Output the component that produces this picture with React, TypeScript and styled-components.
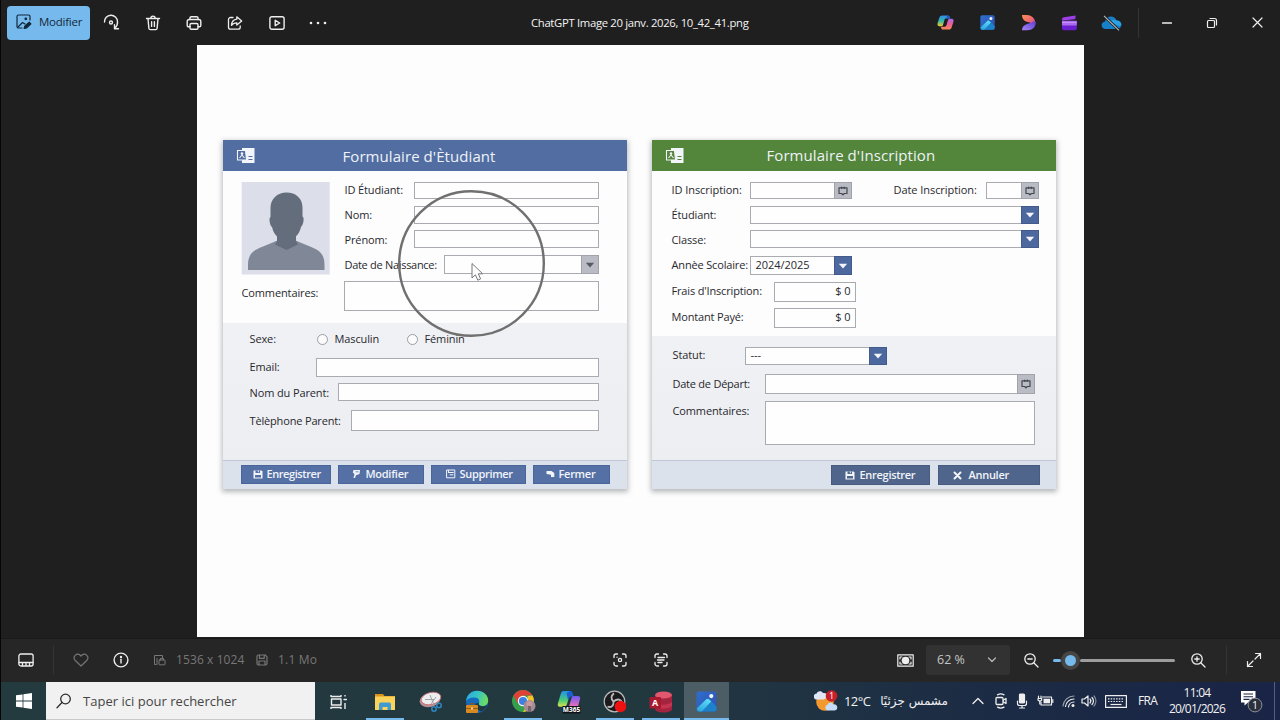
import React from 'react'
import styled, { createGlobalStyle } from 'styled-components'

const GlobalStyle = createGlobalStyle`
  * {
    box-sizing: border-box;
  }
  body {
    margin: 0;
    background: #1f1f1f;
    font-family: 'Open Sans', 'Noto Sans', sans-serif;
  }
  svg {
    display: block;
    flex: none;
  }
`

const Screen = styled.div`
  position: relative;
  display: flex;
  flex-direction: column;
  width: 1280px;
  height: 720px;
  overflow: hidden;
  background: #1f1f1f;
  border-left: 1px solid #050505;
`

/* generic bar pieces */

const Cell = styled.div<{ $w: number }>`
  display: flex;
  flex: none;
  align-items: center;
  justify-content: center;
  width: ${({ $w }) => $w}px;
`

const Spacer = styled.div`
  flex: 1;
`

const Separator = styled.div`
  flex: none;
  width: 1px;
  height: 30px;
  background: #343434;
`

const DesktopEdge = styled.div`
  flex: none;
  width: 1px;
  background: #4a6482;
`

const Caption = styled.span<{ $size?: number; $ls?: number; $color?: string; $w?: number }>`
  flex: none;
  width: ${({ $w }) => ($w ? `${$w}px` : 'auto')};
  color: ${({ $color }) => $color || '#f2f2f2'};
  font-size: ${({ $size }) => $size || 12}px;
  letter-spacing: ${({ $ls }) => $ls || 0}px;
  line-height: 16px;
  white-space: nowrap;
`

/* title bar */

const TitleBar = styled.header`
  display: flex;
  flex: none;
  align-items: center;
  height: 45px;
`

const EditButton = styled.button`
  display: flex;
  flex: none;
  align-items: flex-start;
  gap: 7px;
  width: 83px;
  height: 34px;
  margin: 0 1px 0 6px;
  padding: 8px 0 0 9px;
  border: 0;
  border-radius: 4px;
  background: #76b9ed;
  font-family: inherit;
`

const FileName = styled.div`
  flex: none;
  width: 218px;
  margin-left: 193px;
  padding-bottom: 1px;
  color: #f4f4f4;
  font-size: 11.3px;
  letter-spacing: -0.32px;
  white-space: nowrap;
`

/* viewer */

const Viewer = styled.main`
  display: flex;
  flex: none;
  justify-content: center;
  height: 593px;
  padding-right: 1px;
`

const Picture = styled.div`
  position: relative;
  display: flex;
  align-items: flex-start;
  gap: 25px;
  width: 887px;
  height: 592px;
  padding: 95px 0 0 26px;
  background: #fdfdfd;
`

const Card = styled.section`
  flex: none;
  width: 404px;
  height: 349px;
  background: #fdfdfe;
  box-shadow: 0 2px 5px 1px rgba(70, 75, 85, 0.38);
`

const CardHeader = styled.div<{ $bg: string }>`
  display: flex;
  align-items: center;
  height: 31px;
  padding-left: 13px;
  background: ${({ $bg }) => $bg};
`

const CardTitle = styled.h2<{ $left: number; $up?: number }>`
  margin: 0 0 0 ${({ $left }) => $left}px;
  padding-bottom: ${({ $up }) => $up || 0}px;
  color: #eef2f8;
  font-size: 15px;
  font-weight: 400;
  letter-spacing: 0.07px;
  line-height: 20px;
  white-space: nowrap;
`

const TopPart = styled.div<{ $h: number; $left: number }>`
  display: flex;
  height: ${({ $h }) => $h}px;
  padding: 11px 0 0 ${({ $left }) => $left}px;
`

const GreyPart = styled.div<{ $h: number; $left: number }>`
  height: ${({ $h }) => $h}px;
  padding-left: ${({ $left }) => $left}px;
  overflow: hidden;
  background: linear-gradient(#f0f1f5, #edeef2);
`

const CardFooter = styled.div<{ $gap: number; $left: number }>`
  display: flex;
  gap: ${({ $gap }) => $gap}px;
  height: 29px;
  padding: 4px 0 0 ${({ $left }) => $left}px;
  border-top: 1px solid #bec7d5;
  background: #dce2ec;
`

const Column = styled.div`
  display: flex;
  flex-direction: column;
  flex: none;
`

const Row = styled.div<{ $h: number; $mt?: number }>`
  display: flex;
  align-items: center;
  height: ${({ $h }) => $h}px;
  margin-top: ${({ $mt }) => $mt || 0}px;
`

const Label = styled.label<{ $w: number; $ls?: number; $up?: number; $down?: number }>`
  flex: none;
  width: ${({ $w }) => $w}px;
  padding: ${({ $down }) => $down || 0}px 0 ${({ $up }) => $up || 0}px 1px;
  color: #28292d;
  font-size: 11px;
  letter-spacing: ${({ $ls }) => $ls ?? -0.12}px;
  line-height: 16px;
  white-space: nowrap;
`

const Field = styled.div<{ $w: number; $right?: boolean }>`
  display: flex;
  flex: none;
  align-items: center;
  justify-content: ${({ $right }) => ($right ? 'flex-end' : 'space-between')};
  align-self: stretch;
  width: ${({ $w }) => $w}px;
  padding-left: 5px;
  padding-right: ${({ $right }) => ($right ? 4 : 0)}px;
  border: 1px solid #a9abb1;
  background: #fefefe;
`

const Value = styled.span`
  padding-bottom: 2px;
  color: #28292d;
  font-size: 11px;
  letter-spacing: -0.05px;
  line-height: 14px;
  white-space: nowrap;
`

const FieldButton = styled.div<{ $tone: 'blue' | 'grey' }>`
  display: flex;
  align-items: center;
  justify-content: center;
  align-self: stretch;
  width: 18px;
  margin: -1px -1px -1px auto;
  border: 1px solid ${({ $tone }) => ($tone === 'blue' ? '#435b8b' : '#a0a3aa')};
  background: ${({ $tone }) => ($tone === 'blue' ? '#4c689f' : '#b9bcc4')};
`

const Radio = styled.span`
  flex: none;
  width: 11px;
  height: 11px;
  margin-right: 6px;
  border: 1px solid #9b9da3;
  border-radius: 50%;
  background: #fbfbfc;
`

const PushButton = styled.button<{ $w: number; $dark?: boolean; $gap?: number; $pl: number; $ls?: number }>`
  display: flex;
  flex: none;
  align-items: center;
  gap: ${({ $gap }) => $gap || 4}px;
  width: ${({ $w }) => $w}px;
  height: ${({ $dark }) => ($dark ? 20 : 19)}px;
  padding: 0 0 ${({ $dark }) => ($dark ? 0 : 1)}px ${({ $pl }) => $pl}px;
  border: 1px solid ${({ $dark }) => ($dark ? '#475b7e' : '#4a659b')};
  background: ${({ $dark }) => ($dark ? '#50658b' : '#5570a4')};
  color: #f1f4f9;
  font-family: inherit;
  font-size: 11px;
  font-weight: 600;
  letter-spacing: ${({ $ls }) => $ls ?? -0.28}px;
  line-height: 16px;
  white-space: nowrap;
`

const Pointer = styled.div`
  position: absolute;
  top: 144px;
  left: 200px;
`

/* status bar */

const StatusBar = styled.footer`
  display: flex;
  flex: none;
  align-items: center;
  height: 44px;
  padding-bottom: 1px;
  border-top: 1px solid #1a1a1a;
  background: #262626;
`

const ZoomBox = styled.div`
  display: flex;
  flex: none;
  align-items: center;
  justify-content: space-between;
  width: 84px;
  height: 30px;
  padding: 0 12px 0 11px;
  border-radius: 3px;
  background: #323232;
`

const Slider = styled.div`
  display: flex;
  flex: none;
  align-items: center;
  width: 122px;
`

const Track = styled.div<{ $w: number; $color: string }>`
  width: ${({ $w }) => $w}px;
  height: 3px;
  border-radius: 2px;
  background: ${({ $color }) => $color};
`

const Thumb = styled.div`
  flex: none;
  width: 19px;
  height: 19px;
  border: 4px solid #454545;
  border-radius: 50%;
  background: #76b9ed;
`

/* taskbar */

const Taskbar = styled.nav`
  display: flex;
  flex: none;
  height: 38px;
  background: linear-gradient(90deg, #233a3f 0%, #22383f 50%, #1f3243 64%, #1b2a45 80%, #1a2446 100%);
`

const Search = styled.div`
  display: flex;
  align-items: center;
  gap: 11px;
  width: 269px;
  padding-left: 10px;
  border-bottom: 1px solid #c8c8c8;
  background: #f1f1f1;
`

const TaskSlot = styled.div<{ $open?: boolean; $active?: boolean }>`
  display: flex;
  flex: none;
  align-items: center;
  justify-content: center;
  width: ${({ $active }) => ($active ? 45 : 38)}px;
  margin: 0 ${({ $active }) => ($active ? 0 : 4)}px;
  padding-top: 1px;
  background: ${({ $active }) => ($active ? '#4d5d66' : 'transparent')};
  box-shadow: ${({ $open }) => ($open ? 'inset 0 -2px #76b9ed' : 'none')};
`

const Clock = styled.div`
  display: flex;
  flex-direction: column;
  flex: none;
  align-items: center;
  width: 64px;
  padding-top: 3px;
`

const Arabic = styled.span`
  width: 68px;
  color: #f0f0f0;
  font-family: 'DejaVu Sans', sans-serif;
  font-size: 12px;
  white-space: nowrap;
`

/* icons */

interface GlyphProps {
  w?: number
  h?: number
  color?: string
  sw?: number
  children: React.ReactNode
}

const Glyph: React.FC<GlyphProps> = ({ w = 16, h = 16, color = '#eeeeee', sw = 1.3, children }) => (
  <svg
    width={w}
    height={h}
    viewBox={`0 0 ${w} ${h}`}
    fill="none"
    stroke={color}
    strokeWidth={sw}
    strokeLinecap="round"
    strokeLinejoin="round"
  >
    {children}
  </svg>
)

const EditIcon = () => (
  <Glyph color="#12283a" sw={1.2}>
    <path d="M14 6V2.5A1.5 1.5 0 0 0 12.500 1H2.500A1.500 1.500 0 0 0 1 2.500v10A1.500 1.500 0 0 0 2.500 14H6" />
    <path d="M2 13l4.500-4.500L9 10" />
    <circle cx="9.800" cy="4.800" r="0.800" fill="#12283a" />
    <path d="M8.200 14.500l.6-2.300 4.400-4.100 1.700 1.700-4.400 4.200z" fill="#12283a" />
  </Glyph>
)

const RotateIcon = () => (
  <Glyph w={17} h={17} sw={1.4}>
    <path d="M1.500 8A6.500 6.500 0 0 1 14.500 7.500c.3 2.500-.6 4.500-2.500 6.500" />
    <path d="M15.500 14.800h-4v-4" />
    <circle cx="8" cy="8.500" r="1.500" />
  </Glyph>
)

const TrashIcon = () => (
  <Glyph sw={1.4}>
    <path d="M1.500 3.500h13M5.800 3.300a2.200 2.200 0 0 1 4.400 0M3 3.800l.9 9.600a1.400 1.400 0 0 0 1.400 1.200h5.400a1.400 1.400 0 0 0 1.400-1.200l.9-9.600M6.600 6.800v4.600M9.400 6.800v4.600" />
  </Glyph>
)

const PrintIcon = () => (
  <Glyph sw={1.4}>
    <path d="M4 4.500V3a1.300 1.300 0 0 1 1.300-1.300h5.400A1.300 1.300 0 0 1 12 3v1.500" />
    <path d="M4 11.800H2.500A1.300 1.300 0 0 1 1.200 10.500V6.500a2 2 0 0 1 2-2h9.600a2 2 0 0 1 2 2v4a1.300 1.300 0 0 1-1.300 1.300H12" />
    <rect x="4" y="8.500" width="8" height="5.800" rx="1.200" />
  </Glyph>
)

const ShareIcon = () => (
  <Glyph>
    <path d="M6 2.500H3.500a2 2 0 0 0-2 2v7.700a2 2 0 0 0 2 2h7.700a2 2 0 0 0 2-2V11" />
    <path d="M9.800 1.800l4.900 4.100-4.900 4.200V7.800c-2.300 0-4 .7-5.300 2.600.2-3.600 2-5.800 5.300-6.200z" />
  </Glyph>
)

const SlideshowIcon = () => (
  <Glyph sw={1.4}>
    <rect x="0.900" y="1.700" width="14.200" height="12.600" rx="2" />
    <path d="M6.200 5.300v5.400L10.700 8z" />
  </Glyph>
)

const MoreIcon = () => (
  <Glyph w={18} h={4}>
    <g fill="#eeeeee" stroke="none">
      <circle cx="2" cy="2" r="1.300" />
      <circle cx="9" cy="2" r="1.300" />
      <circle cx="16" cy="2" r="1.300" />
    </g>
  </Glyph>
)

const CopilotIcon = () => (
  <svg width="17" height="15" viewBox="0 0 20 18">
    <defs>
      <linearGradient id="cpA" x1="0" y1="0" x2="0" y2="1">
        <stop offset="0" stopColor="#2b8cf0" />
        <stop offset="0.5" stopColor="#35b8a8" />
        <stop offset="1" stopColor="#f2cb2c" />
      </linearGradient>
      <linearGradient id="cpB" x1="0" y1="0" x2="0" y2="1">
        <stop offset="0" stopColor="#a66be8" />
        <stop offset="0.5" stopColor="#ef5e97" />
        <stop offset="1" stopColor="#f78a4c" />
      </linearGradient>
    </defs>
    <path d="M6 .5h7c1.500 0 2 1 2.500 3.500H11c-1.500 0-2 1-2.400 2.300L7.300 11c-.5 1.500-1 2.500-2.300 2.500H2.500C.6 13.500 0 11.800.5 10L2.700 3C3.200 1.300 4.300.5 6 .5z" fill="url(#cpA)" />
    <path d="M14 17.500H7c-1.500 0-2-1-2.500-3.500H9c1.500 0 2-1 2.400-2.300L12.700 7c.5-1.500 1-2.500 2.300-2.500h2.500c1.900 0 2.500 1.700 2 3.500l-2.200 7c-.5 1.700-1.600 2.500-3.300 2.500z" fill="url(#cpB)" />
    <path d="M12 .5c2.300 0 2.800 1.500 3.300 4H11" fill="#2456c8" />
  </svg>
)

const PhotosIcon = ({ size = 15 }: { size?: number }) => (
  <svg width={size} height={size} viewBox="0 0 22 22">
    <defs>
      <linearGradient id="phA" x1="0" y1="0" x2="1" y2="1">
        <stop offset="0" stopColor="#2c6fd0" />
        <stop offset="1" stopColor="#3450ad" />
      </linearGradient>
      <linearGradient id="phB" x1="0.500" y1="0" x2="0" y2="1">
        <stop offset="0" stopColor="#59d8f5" />
        <stop offset="1" stopColor="#28a0dc" />
      </linearGradient>
    </defs>
    <rect x="0.500" y="0.500" width="21" height="21" rx="2.500" fill="url(#phA)" />
    <path d="M1 18.500L11 8.700c1-.9 2-.9 3 0l7.500 7.500V19a2.500 2.500 0 0 1-2.500 2.500H3.500A2.500 2.500 0 0 1 1 19z" fill="#1b82cb" />
    <path d="M1 18L10.800 8.700c1-.9 2-.9 2.800 0L16 11 6 21.500H3.500A2.500 2.500 0 0 1 1 19z" fill="url(#phB)" />
    <circle cx="16" cy="5.300" r="2.200" fill="#f3f6fb" />
  </svg>
)

const DesignerIcon = () => (
  <svg width="15" height="17" viewBox="0 0 15 17">
    <defs>
      <linearGradient id="dsA" x1="0" y1="0" x2="1" y2="1">
        <stop offset="0" stopColor="#f8914e" />
        <stop offset="0.500" stopColor="#ee6a6e" />
        <stop offset="1" stopColor="#c13fbf" />
      </linearGradient>
      <linearGradient id="dsB" x1="1" y1="0" x2="0" y2="1">
        <stop offset="0" stopColor="#5a3fd6" />
        <stop offset="1" stopColor="#a783f5" />
      </linearGradient>
    </defs>
    <path d="M1 1h4.500a8.500 8.500 0 0 1 9 7.500c0 1.500-.6 3-1.500 4C12 9.500 9.500 8.500 5 7.500 2.500 6.800 1 4 1 1z" fill="url(#dsA)" />
    <path d="M14.500 9c0 4.500-3.200 7.200-8 7.200H1c0-3 1.500-5 4.500-6 3-1 5-1 6.500-2.700 1.500 0 2.500 0 2.500 1.500z" fill="url(#dsB)" />
  </svg>
)

const ClipchampIcon = () => (
  <svg width="17" height="16" viewBox="0 0 17 16">
    <path d="M1 4.600C1 3 1.700 2.500 3 2.200L14.500.5v2.200c0 .9-.3 1.300-1.200 1.500L1 5.500z" fill="#9d3fe4" />
    <path d="M1 5.800h14.800v7.500c0 1.200-.7 1.900-1.900 1.900h-11C1.700 15.200 1 14.500 1 13.300z" fill="#6a1fd0" />
    <path d="M1 5.800h14.800v4.700H1z" fill="#ab6af0" />
    <path d="M1 7.500h14.800" stroke="#c99bfa" strokeWidth="0.800" />
  </svg>
)

const CloudOffIcon = () => (
  <svg width="21" height="16" viewBox="0 0 21 16">
    <path d="M4.800 14C2.300 14 .6 12.400.6 10.200c0-2 1.500-3.500 3.400-3.700C4.800 3.500 7 1.600 9.900 1.600c2.600 0 4.600 1.500 5.600 3.800 2.900 0 4.900 1.900 4.900 4.400S18.500 14 16 14z" fill="#1680c8" />
    <path d="M9 6.500c2-1.800 5-1.500 6.500-1.100 2.900 0 4.900 1.900 4.900 4.400l-2 1.500z" fill="#2ba0e4" />
    <path d="M3 .8l15 14.500" stroke="#1f1f1f" strokeWidth="2.600" />
    <path d="M3 .8l15 14.500" stroke="#b9bdc0" strokeWidth="1.100" />
  </svg>
)

const FormIcon = ({ bg }: { bg: string }) => (
  <svg width="20" height="17" viewBox="0 0 20 17">
    <path d="M6 1h12.500v15H6z" fill="#f2f5f9" />
    <path d="M12.500 9.500h4M12.500 12.500h4" stroke={bg} strokeWidth="1" />
    <path d="M1.500 3.500h8l1 9.500h-9z" fill={bg} stroke="#f2f5f9" strokeWidth="1.100" />
    <circle cx="6" cy="6.600" r="1.300" fill="#f2f5f9" />
    <path d="M3.500 11l2.500-3 2.500 3" stroke="#f2f5f9" strokeWidth="1.100" fill="none" />
  </svg>
)

const Avatar = () => (
  <svg width="89" height="93" viewBox="0 0 89 93">
    <rect x="0.700" width="88" height="92.500" fill="#dcdfe9" />
    <path d="M7 88v-5c0-11 5-14.500 15-18.500l14.500-6h18l14.500 6c10 4 14.500 7.500 14.500 18.500v5z" fill="#808898" />
    <path d="M45.500 10.500c9.500 0 16 6 16 15v9c2 .5 1.200 8-1.500 10.500-.9 4-2.500 7-5 9.300V59l2 3.500-11.500 5.500-11.500-5.500 2-3.500v-4.500c-2.500-2.500-4-5-4.800-9-2.700-2.500-3.500-10-1.700-10.500v-9c0-9 6.500-15.500 16-15.500z" fill="#646d7c" />
  </svg>
)

const Arrow = ({ color = '#f4f6fa' }: { color?: string }) => (
  <svg width="10" height="6" viewBox="0 0 10 6">
    <path d="M0.800 0.800h8.400L5 5.400z" fill={color} />
  </svg>
)

const CalendarIcon = () => (
  <Glyph w={10} h={10} color="#43464d" sw={1.200}>
    <path d="M1 1.800h8v5.700H6.300L5 8.800 3.700 7.500H1z" />
    <path d="M3.700 1v1.500M6.300 1v1.500" />
  </Glyph>
)

const DiskIcon = ({ bg = '#5570a4' }: { bg?: string }) => (
  <svg width="10" height="9" viewBox="0 0 10 9">
    <path d="M0.500 0.500h8l1 1V8.500h-9z" fill="#f1f4f9" />
    <path d="M2.500.5h4.500v2.500H2.500zM2 5h6v2.500H2z" fill={bg} />
    <path d="M4.800.5h1v1.700h-1z" fill="#f1f4f9" />
  </svg>
)

const PenIcon = () => (
  <svg width="9" height="10" viewBox="0 0 9 10">
    <path d="M1.500 1h6.500L7.500 5 4 6.200 3 9H1.500l1-4L.8 3.500z" fill="#f1f4f9" />
    <path d="M3.500 2.800h3" stroke="#5570a4" strokeWidth="0.800" />
  </svg>
)

const DeleteFormIcon = () => (
  <Glyph w={10} h={10} color="#f1f4f9" sw={1}>
    <rect x="1" y="1" width="7.800" height="7.800" />
    <path d="M2.500 3.500h4.800M2.500 1.500v2M4 5.800h3" />
  </Glyph>
)

const DoorIcon = () => (
  <svg width="9" height="8" viewBox="0 0 9 8">
    <path d="M0.500 1h5l2.800 2V7H5V4.800L.5 4z" fill="#f1f4f9" />
  </svg>
)

const CrossIcon = () => (
  <Glyph w={9} h={9} color="#f1f4f9" sw={2}>
    <path d="M1.500 1.500l6 6M7.500 1.500l-6 6" />
  </Glyph>
)

const SpotlightCursor = () => (
  <svg width="150" height="150" viewBox="0 0 150 150">
    <circle cx="74.500" cy="74.500" r="72.300" fill="none" stroke="#707070" strokeWidth="2.400" />
    <path d="M75 74.500v14.500l3.400-3.200 2.400 5.400 2.800-1.300-2.300-5.100h4.400z" fill="#fdfdfd" stroke="#77787a" strokeWidth="1" />
  </svg>
)

const StudentForm = () => (
  <Card>
    <CardHeader $bg="#526da1">
      <FormIcon bg="#526da1" />
      <CardTitle $left={87}>Formulaire d'Ètudiant</CardTitle>
    </CardHeader>
    <TopPart $h={152} $left={18}>
      <Column>
        <Avatar />
        <Row $h={16} $mt={10}>
          <Label $w={103}>Commentaires:</Label>
        </Row>
      </Column>
      <Column>
        <Row $h={17}>
          <Label $w={70} $up={1}>
            ID Étudiant:
          </Label>
          <Field $w={185} />
        </Row>
        <Row $h={18} $mt={7}>
          <Label $w={70}>Nom:</Label>
          <Field $w={185} />
        </Row>
        <Row $h={18} $mt={6}>
          <Label $w={70} $down={2}>
            Prénom:
          </Label>
          <Field $w={185} />
        </Row>
        <Row $h={19} $mt={7}>
          <Label $w={100} $ls={-0.3}>
            Date de Naissance:
          </Label>
          <Field $w={155}>
            <FieldButton $tone="grey">
              <Arrow color="#565a63" />
            </FieldButton>
          </Field>
        </Row>
        <Row $h={30} $mt={7}>
          <Field $w={255} />
        </Row>
      </Column>
    </TopPart>
    <GreyPart $h={137} $left={26}>
      <Row $h={16} $mt={8}>
        <Label $w={68}>Sexe:</Label>
        <Radio />
        <Label $w={73}>Masculin</Label>
        <Radio />
        <Label $w={50}>Féminin</Label>
      </Row>
      <Row $h={19} $mt={11}>
        <Label $w={67} $up={1}>
          Email:
        </Label>
        <Field $w={283} />
      </Row>
      <Row $h={18} $mt={6}>
        <Label $w={89} $down={2}>
          Nom du Parent:
        </Label>
        <Field $w={261} />
      </Row>
      <Row $h={21} $mt={9}>
        <Label $w={102} $ls={-0.16}>
          Tèlèphone Parent:
        </Label>
        <Field $w={248} />
      </Row>
    </GreyPart>
    <CardFooter $gap={7} $left={18}>
      <PushButton $w={90} $pl={11} $ls={-0.42}>
        <DiskIcon />
        Enregistrer
      </PushButton>
      <PushButton $w={86} $pl={13} $gap={5}>
        <PenIcon />
        Modifier
      </PushButton>
      <PushButton $w={95} $pl={14} $ls={-0.32}>
        <DeleteFormIcon />
        Supprimer
      </PushButton>
      <PushButton $w={77} $pl={12}>
        <DoorIcon />
        Fermer
      </PushButton>
    </CardFooter>
  </Card>
)

const EnrollmentForm = () => (
  <Card>
    <CardHeader $bg="#53853a">
      <FormIcon bg="#53853a" />
      <CardTitle $left={82} $up={2}>
        Formulaire d'Inscription
      </CardTitle>
    </CardHeader>
    <TopPart $h={165} $left={19}>
      <Column>
        <Row $h={17}>
          <Label $w={79} $up={1} $ls={-0.06}>
            ID Inscription:
          </Label>
          <Field $w={102}>
            <FieldButton $tone="grey">
              <CalendarIcon />
            </FieldButton>
          </Field>
          <Cell $w={41} />
          <Label $w={93} $up={1} $ls={-0.06}>
            Date Inscription:
          </Label>
          <Field $w={53}>
            <FieldButton $tone="grey">
              <CalendarIcon />
            </FieldButton>
          </Field>
        </Row>
        <Row $h={18} $mt={7}>
          <Label $w={79}>Étudiant:</Label>
          <Field $w={289}>
            <FieldButton $tone="blue">
              <Arrow />
            </FieldButton>
          </Field>
        </Row>
        <Row $h={18} $mt={6}>
          <Label $w={79} $down={2}>
            Classe:
          </Label>
          <Field $w={289}>
            <FieldButton $tone="blue">
              <Arrow />
            </FieldButton>
          </Field>
        </Row>
        <Row $h={19} $mt={8}>
          <Label $w={79} $up={1} $ls={-0.16}>
            Annèe Scolaire:
          </Label>
          <Field $w={102}>
            <Value>2024/2025</Value>
            <FieldButton $tone="blue">
              <Arrow />
            </FieldButton>
          </Field>
        </Row>
        <Row $h={20} $mt={7}>
          <Label $w={103} $up={2} $ls={-0.16}>
            Frais d'Inscription:
          </Label>
          <Field $w={82} $right>
            <Value>$ 0</Value>
          </Field>
        </Row>
        <Row $h={20} $mt={6}>
          <Label $w={103} $up={2} $ls={-0.16}>
            Montant Payé:
          </Label>
          <Field $w={82} $right>
            <Value>$ 0</Value>
          </Field>
        </Row>
      </Column>
    </TopPart>
    <GreyPart $h={124} $left={20}>
      <Row $h={18} $mt={11}>
        <Label $w={73} $up={2}>
          Statut:
        </Label>
        <Field $w={142}>
          <Value>---</Value>
          <FieldButton $tone="blue">
            <Arrow />
          </FieldButton>
        </Field>
      </Row>
      <Row $h={20} $mt={9}>
        <Label $w={93} $ls={-0.24}>
          Date de Départ:
        </Label>
        <Field $w={270}>
          <FieldButton $tone="grey">
            <CalendarIcon />
          </FieldButton>
        </Field>
      </Row>
      <Row $h={44} $mt={7}>
        <Label $w={93} $up={24}>
          Commentaires:
        </Label>
        <Field $w={270} />
      </Row>
    </GreyPart>
    <CardFooter $gap={8} $left={179}>
      <PushButton $w={99} $pl={13} $gap={5} $dark>
        <DiskIcon bg="#50658b" />
        Enregistrer
      </PushButton>
      <PushButton $w={102} $pl={14} $gap={7} $dark>
        <CrossIcon />
        Annuler
      </PushButton>
    </CardFooter>
  </Card>
)

/* status bar icons */

const FilmstripIcon = () => (
  <Glyph>
    <rect x="0.900" y="2" width="14.200" height="12" rx="2" />
    <path d="M1 10.500h14M4.500 11v2.500M8 11v2.500M11.500 11v2.500" />
  </Glyph>
)

const HeartIcon = () => (
  <Glyph color="#757575" sw={1.200}>
    <path d="M8 14L2 8.200C-.6 5 3.800-.8 8 4c4.200-4.800 8.600 1 6 4.200z" />
  </Glyph>
)

const InfoIcon = () => (
  <Glyph sw={1.4}>
    <circle cx="8" cy="8" r="6.900" />
    <path d="M8 7.300v3.700" />
    <circle cx="8" cy="4.900" r="0.500" fill="#eeeeee" />
  </Glyph>
)

const DimensionsIcon = () => (
  <Glyph w={13} h={12} color="#777777" sw={1}>
    <path d="M3 10.500H1.500v-9H9.500V4M4 4.500v6" />
    <rect x="6" y="6" width="6" height="4.800" rx="0.500" />
    <path d="M7.500 6V4.500h3V6" />
  </Glyph>
)

const SaveIcon = () => (
  <Glyph w={12} h={12} color="#777777" sw={1.200}>
    <path d="M1 2.500A1.500 1.500 0 0 1 2.500 1h6.700L11 2.800v6.700A1.500 1.500 0 0 1 9.500 11h-7A1.500 1.500 0 0 1 1 9.500z" />
    <path d="M3.500 1.300v3h4.700v-3M3 10.700V7h6v3.700" />
  </Glyph>
)

const Corners = () => <path d="M1 4.500V3a2 2 0 0 1 2-2h1.500M9.500 1H11a2 2 0 0 1 2 2v1.500M13 9.500V11a2 2 0 0 1-2 2H9.500M4.500 13H3a2 2 0 0 1-2-2V9.500" />

const VisualSearchIcon = () => (
  <Glyph w={14} h={14}>
    <Corners />
    <circle cx="7" cy="7" r="1.600" />
    <path d="M4 4.200h.1" />
  </Glyph>
)

const TextScanIcon = () => (
  <Glyph w={14} h={14}>
    <Corners />
    <path d="M4 4.500h6.500M3.500 7H10M4 9.500h4" />
  </Glyph>
)

const FitIcon = () => (
  <Glyph w={17} h={13} sw={1.200}>
    <rect x="0.800" y="0.800" width="15.400" height="11.400" />
    <circle cx="8.500" cy="6.500" r="3.200" fill="#eeeeee" />
    <path d="M3 5V3h2M12 3h2v2M14 8v2h-2M5 10H3V8" />
  </Glyph>
)

const ZoomIcon = ({ plus }: { plus?: boolean }) => (
  <Glyph>
    <circle cx="7" cy="7" r="5.200" />
    <path d="M11 11l4 4M4.800 7h4.400" />
    {plus && <path d="M7 4.800v4.400" />}
  </Glyph>
)

const Chevron = ({ up }: { up?: boolean }) => (
  <Glyph w={12} h={8} color={up ? '#eeeeee' : '#b5b5b5'}>
    <path d={up ? 'M1 6.500l5-5 5 5' : 'M2.500 2l3.500 3.500L9.500 2'} />
  </Glyph>
)

/* taskbar icons */

const WindowsLogo = () => (
  <svg width="16" height="16" viewBox="0 0 16 16" fill="#ffffff">
    <path d="M0 2.300l6.600-.9v6.200H0zM7.400 1.300L16 0v7.600H7.400zM0 8.400h6.600v6.200L0 13.700zM7.400 8.400H16V16l-8.600-1.200z" />
  </svg>
)

const TaskViewIcon = () => (
  <Glyph w={17} h={16} sw={1.400}>
    <path d="M1 1v1.500h10V1M1 15v-1.500h10V15M15 1v1.500M15 9v6" strokeLinecap="butt" />
    <rect x="1.500" y="5" width="9.500" height="6" />
    <path d="M14 5.500h2.500" />
  </Glyph>
)

const FolderIcon = () => (
  <svg width="22" height="18" viewBox="0 0 22 18">
    <path d="M1 1h8l1.500 2H21v3H1z" fill="#d9941c" />
    <path d="M1 3.500h20V17H1z" fill="#fbd35b" />
    <path d="M5 17v-5.500C5 10 6 9.500 7 9.500h8c1 0 2 .5 2 2V17h-3.500v-3h-5v3z" fill="#3f9bd0" />
  </svg>
)

const SnipIcon = () => (
  <svg width="24" height="22" viewBox="0 0 24 22">
    <ellipse cx="11" cy="9" rx="10.500" ry="7" transform="rotate(-14 11 9)" fill="#b98f94" />
    <ellipse cx="12" cy="7.500" rx="10" ry="6" transform="rotate(-14 12 7.500)" fill="#ededee" stroke="#c7696d" strokeWidth="0.800" />
    <path d="M11 4l4 10M17 6l-5 7M6 8.500h9" stroke="#9a9da2" strokeWidth="0.900" />
    <circle cx="15" cy="18" r="2.200" fill="none" stroke="#2f86c2" strokeWidth="1.500" />
    <circle cx="20" cy="14.500" r="2.200" fill="none" stroke="#2f86c2" strokeWidth="1.500" />
  </svg>
)

const EdgeIcon = () => (
  <svg width="24" height="24" viewBox="0 0 24 24">
    <defs>
      <linearGradient id="edA" x1="0" y1="0" x2="1" y2="0.300">
        <stop offset="0" stopColor="#2aa6de" />
        <stop offset="0.550" stopColor="#35c4c8" />
        <stop offset="1" stopColor="#6bdc62" />
      </linearGradient>
    </defs>
    <circle cx="12" cy="12" r="11" fill="#1669bb" />
    <path d="M1 11C2 4.500 6.500.8 12 .8c6.500 0 11.200 4.500 11.200 9.700 0 3.500-2.500 5.500-5.700 5.500-2.500 0-4-1-3.500-2.500.8-2.200.4-5.500-4-6C6 7 2.500 9 1 11z" fill="url(#edA)" />
    <path d="M13.800 13c-.8 2.200 1.500 3.800 5 3.200 1.700-.3 3-.9 3.400-.6-1 2.400-3.200 4.800-5.200 5.900-4-.5-7.500-4-6.500-8z" fill="#22383f" />
    <rect x="1" y="15" width="12" height="8" rx="1" fill="#d88a22" />
    <path d="M5 15v-1.300h4V15" stroke="#8a5713" fill="none" />
    <path d="M1 18.500h12" stroke="#8a5713" strokeWidth="0.900" />
    <rect x="6" y="17.500" width="2" height="2" fill="#f6d08c" />
  </svg>
)

const ChromeIcon = () => (
  <svg width="25" height="25" viewBox="0 0 25 25">
    <circle cx="12" cy="12" r="11" fill="#35a04c" />
    <path d="M2.500 6.500A11 11 0 0 1 21.500 6.500H12L7 14.800z" fill="#dd4234" />
    <path d="M21.500 6.500A11 11 0 0 1 12 23l5-8.500L16.500 7z" fill="#f6c12b" />
    <circle cx="12" cy="12" r="5.200" fill="#ffffff" />
    <circle cx="12" cy="12" r="4.100" fill="#3f7fe0" />
    <circle cx="18.500" cy="17" r="6" fill="#a58c92" />
    <circle cx="18.500" cy="15" r="3" fill="#c79a9e" />
    <path d="M17 17h3v6h-3z" fill="#77636c" />
  </svg>
)

const M365Icon = () => (
  <svg width="24" height="24" viewBox="0 0 24 24">
    <defs>
      <linearGradient id="mA" x1="0" y1="0" x2="0" y2="1">
        <stop offset="0" stopColor="#2390ea" />
        <stop offset="0.600" stopColor="#4bcd73" />
        <stop offset="1" stopColor="#dfe04a" />
      </linearGradient>
      <linearGradient id="mB" x1="0" y1="0" x2="0" y2="1">
        <stop offset="0" stopColor="#6c5cf0" />
        <stop offset="1" stopColor="#f06fb8" />
      </linearGradient>
    </defs>
    <path d="M6.500 1H14l-4 13c-.5 1.700-1.300 2.800-3 2.800H3C.8 16.800.3 15 1 13L4 3c.5-1.300 1.200-2 2.500-2z" fill="url(#mA)" />
    <path d="M13 1c2.300 0 2.800 1.500 3.500 5l-3.500 1-2 3L9.500 3z" fill="#1c5fcf" />
    <path d="M16 6h5c2 0 2.500 1.500 2 3l-2 7.500h-9L14.500 8c.3-1 .7-2 1.500-2z" fill="url(#mB)" />
    <rect x="5.500" y="16" width="18" height="7.500" fill="#101418" />
    <text x="14.500" y="22.300" textAnchor="middle" fontFamily="Open Sans, sans-serif" fontSize="6.500" fontWeight="700" fill="#ffffff">
      M365
    </text>
  </svg>
)

const ObsIcon = () => (
  <svg width="24" height="24" viewBox="0 0 24 24">
    <circle cx="11.500" cy="11.500" r="10.300" fill="#1b1b1d" stroke="#b7b9bb" strokeWidth="1.200" />
    <path d="M11 3.200c-3 2.500-3.500 5.500-.5 8.300M19.500 13c-1.500-3.500-4.500-5-9-1.500M4.500 16.500c3.500 1.500 6.500-.5 6-5" fill="none" stroke="#b7b9bb" strokeWidth="1.800" />
    <circle cx="17.500" cy="16.500" r="5.800" fill="#ee1111" />
  </svg>
)

const AccessIcon = () => (
  <svg width="24" height="22" viewBox="0 0 24 22">
    <path d="M6 4h17v14c0 2-4 3.500-8.500 3.500S6 20 6 18z" fill="#a4243f" />
    <path d="M6 11c5 3.500 12 3.500 17 0v4c-5 3.500-12 3.500-17 0z" fill="#c4334f" />
    <ellipse cx="14.500" cy="4" rx="8.500" ry="3.500" fill="#e0576e" />
    <rect x="0.500" y="6" width="11.500" height="11.500" rx="1" fill="#a8182f" />
    <text x="6.200" y="15" textAnchor="middle" fontFamily="Open Sans, sans-serif" fontSize="9" fontWeight="700" fill="#ffffff">
      A
    </text>
  </svg>
)

const WeatherIcon = () => (
  <svg width="24" height="22" viewBox="0 0 24 22">
    <circle cx="11" cy="12" r="8.800" fill="#f29a2e" />
    <path d="M3 9.500a3 3 0 0 1-.3-6C3.500 1 7.500.5 9 3c2.500-.4 4 1.500 3.600 3.300-.2 1.700-1.400 3-3.100 3.200z" fill="#dfe7f6" />
    <path d="M13.500 20.500a3 3 0 0 1 0-5.800c1-2.700 4.800-2.700 5.800-.4 2.500-.3 4 1.200 4 3.100 0 1.800-1.300 3.100-3 3.100z" fill="#c6dcf7" />
    <circle cx="17.500" cy="6" r="5.800" fill="#c8202a" />
    <text x="17.500" y="9.200" textAnchor="middle" fontFamily="Open Sans, sans-serif" fontSize="9" fill="#ffffff">
      1
    </text>
  </svg>
)

const MeetIcon = () => (
  <Glyph w={14} h={16} sw={1.300}>
    <rect x="2" y="4.500" width="7" height="7" rx="1" />
    <path d="M9.500 7l2.500-1.500v5L9.500 9M3.500 1.800a7 7 0 0 1 6.500 0M3.500 14.200a7 7 0 0 0 6.500 0" />
  </Glyph>
)

const MicIcon = () => (
  <Glyph w={12} h={16} sw={1.200}>
    <rect x="3.500" y="1" width="5" height="9" rx="1" fill="#eeeeee" />
    <path d="M1.500 8v2.500a2 2 0 0 0 2 2h5a2 2 0 0 0 2-2V8M6 12.500V15M3.500 15h5" />
  </Glyph>
)

const BatteryIcon = () => (
  <Glyph w={17} h={12} sw={1.200}>
    <path d="M5.500 2H14.500v8H4V7" />
    <rect x="6.500" y="3.700" width="6.500" height="4.600" fill="#eeeeee" stroke="none" />
    <path d="M15.800 4.500v3M1.500 1v2M4 1v2M1 3.500h3.700v1.500L2.800 6.500 1 5zM2.800 6.500V9" />
  </Glyph>
)

const WifiIcon = () => (
  <Glyph w={14} h={14} sw={1.200}>
    <path d="M1 12A11 11 0 0 1 12 2" opacity="0.600" />
    <path d="M3.500 12.500A8.500 8.500 0 0 1 12 5M6.500 12.800A5.500 5.500 0 0 1 12 8" />
    <circle cx="11" cy="11.500" r="1.500" fill="#eeeeee" stroke="none" />
  </Glyph>
)

const VolumeIcon = () => (
  <Glyph w={17} h={14} sw={1.200}>
    <path d="M1 5h2.500L7 2v10L3.500 9H1zM9 5a3 3 0 0 1 0 4" />
    <path d="M11 3.500a5 5 0 0 1 0 7" />
    <path d="M13 2a7.500 7.500 0 0 1 0 10" opacity="0.500" />
  </Glyph>
)

const KeyboardIcon = () => (
  <Glyph w={22} h={13} sw={1.200}>
    <rect x="0.600" y="0.600" width="20.800" height="11.800" />
    <path d="M3 3.800h16M3 6.500h16" strokeDasharray="1.500 1.200" strokeLinecap="butt" />
    <path d="M5.500 9.500h11" strokeLinecap="butt" />
  </Glyph>
)

const NotificationIcon = () => (
  <svg width="23" height="23" viewBox="0 0 23 23">
    <path d="M1 1h14.500v11.500H8l-3.500 3v-3H1z" fill="#ffffff" />
    <path d="M3.500 4h9.500M3.500 6.700h9.500M3.500 9.400h6" stroke="#1a2446" strokeWidth="1.100" />
    <circle cx="15" cy="15" r="6.900" fill="#2b303c" stroke="#8c9099" strokeWidth="1" />
    <text x="15" y="18.700" textAnchor="middle" fontFamily="Open Sans, sans-serif" fontSize="10.500" fill="#ffffff">
      1
    </text>
  </svg>
)

const App: React.FC = () => (
  <>
    <GlobalStyle />
    <Screen>
      <TitleBar>
        <EditButton>
          <EditIcon />
          <Caption $color="#14293a" $size={11.5} $ls={-0.25}>
            Modifier
          </Caption>
        </EditButton>
        <Cell $w={41}>
          <RotateIcon />
        </Cell>
        <Cell $w={41}>
          <TrashIcon />
        </Cell>
        <Cell $w={41}>
          <PrintIcon />
        </Cell>
        <Cell $w={42}>
          <ShareIcon />
        </Cell>
        <Cell $w={41}>
          <SlideshowIcon />
        </Cell>
        <Cell $w={41}>
          <MoreIcon />
        </Cell>
        <FileName>ChatGPT Image 20 janv. 2026, 10_42_41.png</FileName>
        <Spacer />
        <Cell $w={41}>
          <CopilotIcon />
        </Cell>
        <Cell $w={42}>
          <PhotosIcon />
        </Cell>
        <Cell $w={41}>
          <DesignerIcon />
        </Cell>
        <Cell $w={41}>
          <ClipchampIcon />
        </Cell>
        <Cell $w={42}>
          <CloudOffIcon />
        </Cell>
        <Cell $w={6} />
        <Separator />
        <Cell $w={56}>
          <Glyph w={10} h={4}>
            <path d="M0.500 2h9" />
          </Glyph>
        </Cell>
        <Cell $w={33}>
          <Glyph w={12} h={12} sw={1.200}>
            <rect x="1.500" y="3.500" width="7" height="7" rx="1" />
            <path d="M4 1.500h4.500a2 2 0 0 1 2 2V8" />
          </Glyph>
        </Cell>
        <Cell $w={6} />
        <Cell $w={46}>
          <Glyph w={11} h={11} sw={1.200}>
            <path d="M1 1l9 9M10 1l-9 9" />
          </Glyph>
        </Cell>
      </TitleBar>

      <Viewer>
        <Picture>
          <StudentForm />
          <EnrollmentForm />
          <Pointer>
            <SpotlightCursor />
          </Pointer>
        </Picture>
      </Viewer>

      <StatusBar>
        <Cell $w={49}>
          <FilmstripIcon />
        </Cell>
        <Cell $w={3} />
        <Separator />
        <Cell $w={53}>
          <HeartIcon />
        </Cell>
        <Cell $w={28}>
          <InfoIcon />
        </Cell>
        <Cell $w={7} />
        <Cell $w={34}>
          <DimensionsIcon />
        </Cell>
        <Caption $w={80} $color="#777777" $size={12} $ls={0.1}>
          1536 x 1024
        </Caption>
        <SaveIcon />
        <Cell $w={10} />
        <Caption $color="#777777" $size={12} $ls={0.2} $w={321}>
          1.1 Mo
        </Caption>
        <Cell $w={41}>
          <VisualSearchIcon />
        </Cell>
        <Cell $w={41}>
          <TextScanIcon />
        </Cell>
        <Spacer />
        <Cell $w={41}>
          <FitIcon />
        </Cell>
        <ZoomBox>
          <Caption $size={12.5} $color="#c4c4c4">
            62 %
          </Caption>
          <Chevron />
        </ZoomBox>
        <Cell $w={41}>
          <ZoomIcon />
        </Cell>
        <Cell $w={2} />
        <Slider>
          <Track $w={8} $color="#76b9ed" />
          <Thumb />
          <Track $w={95} $color="#9d9d9d" />
        </Slider>
        <Cell $w={45}>
          <ZoomIcon plus />
        </Cell>
        <Cell $w={6} />
        <Separator />
        <Cell $w={53}>
          <Glyph sw={1.200}>
            <path d="M9.500 1.500h5v5M14.500 1.500l-5.500 5.500M1.500 9.500v5h5M1.500 14.500L7 9" />
          </Glyph>
        </Cell>
      </StatusBar>

      <Taskbar>
        <Cell $w={45}>
          <WindowsLogo />
        </Cell>
        <Search>
          <Glyph color="#2d2d2d">
            <circle cx="9.500" cy="6" r="4.800" />
            <path d="M6 9.500L1 14.700" />
          </Glyph>
          <Caption $color="#454545" $size={13} $ls={0.02}>
            Taper ici pour rechercher
          </Caption>
        </Search>
        <TaskSlot>
          <TaskViewIcon />
        </TaskSlot>
        <Cell $w={1} />
        <TaskSlot $open>
          <FolderIcon />
        </TaskSlot>
        <TaskSlot>
          <SnipIcon />
        </TaskSlot>
        <TaskSlot>
          <EdgeIcon />
        </TaskSlot>
        <TaskSlot $open>
          <ChromeIcon />
        </TaskSlot>
        <TaskSlot>
          <M365Icon />
        </TaskSlot>
        <TaskSlot $open>
          <ObsIcon />
        </TaskSlot>
        <TaskSlot $open>
          <AccessIcon />
        </TaskSlot>
        <TaskSlot $open $active>
          <PhotosIcon size={21} />
        </TaskSlot>
        <Spacer />
        <Cell $w={37}>
          <WeatherIcon />
        </Cell>
        <Cell $w={104}>
          <Caption $w={36} $size={13} $ls={-0.6}>
            12°C
          </Caption>
          <Arabic dir="rtl" lang="ar">
            مشمس جزئيًا
          </Arabic>
        </Cell>
        <Cell $w={13} />
        <Cell $w={34}>
          <Chevron up />
        </Cell>
        <Cell $w={11}>
          <MeetIcon />
        </Cell>
        <Cell $w={32}>
          <MicIcon />
        </Cell>
        <Cell $w={14}>
          <BatteryIcon />
        </Cell>
        <Cell $w={34}>
          <WifiIcon />
        </Cell>
        <Cell $w={7}>
          <VolumeIcon />
        </Cell>
        <Cell $w={45}>
          <KeyboardIcon />
        </Cell>
        <Cell $w={19}>
          <Caption $size={12} $ls={-0.7}>
            FRA
          </Caption>
        </Cell>
        <Cell $w={8} />
        <Clock>
          <Caption $size={12} $ls={-0.75}>
            11:04
          </Caption>
          <Caption $size={12} $ls={-0.75}>
            20/01/2026
          </Caption>
        </Clock>
        <Cell $w={45}>
          <NotificationIcon />
        </Cell>
        <DesktopEdge />
        <Cell $w={5} />
      </Taskbar>
    </Screen>
  </>
)

export default App
